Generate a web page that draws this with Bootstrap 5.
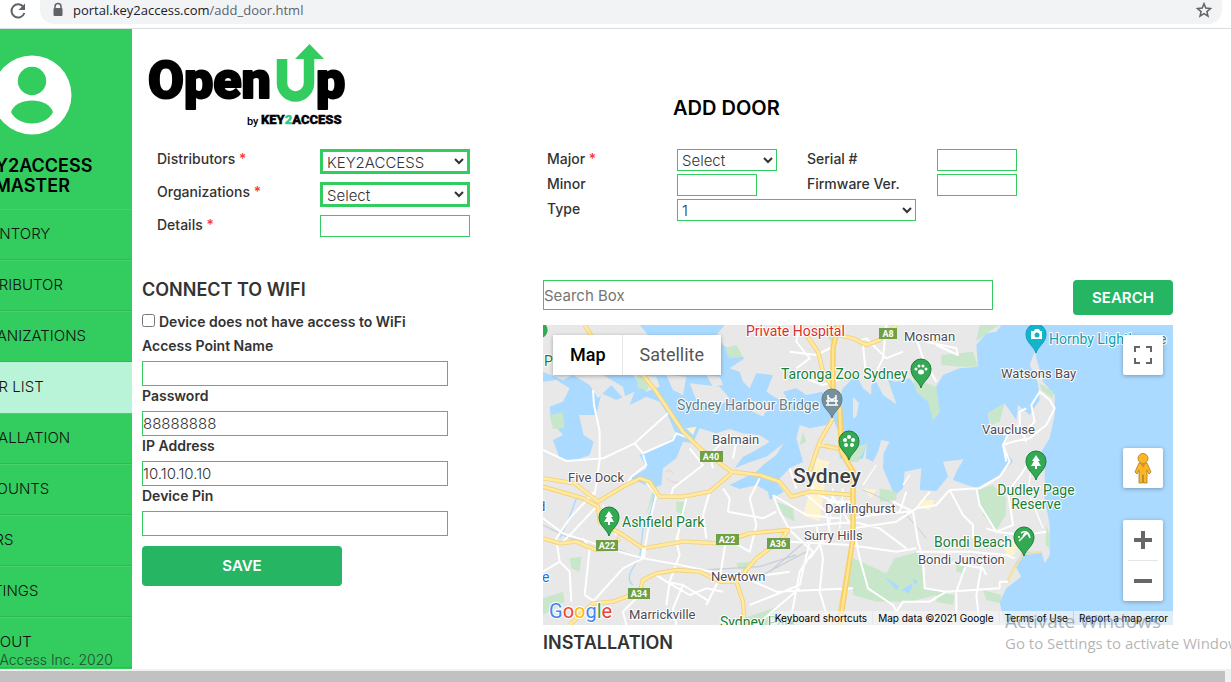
<!DOCTYPE html>
<html lang="en">
<head>
<meta charset="utf-8">
<meta name="viewport" content="width=device-width, initial-scale=1">
<title>Add Door</title>
<link href="https://cdn.jsdelivr.net/npm/bootstrap@5.3.0/dist/css/bootstrap.min.css" rel="stylesheet">
<style>
:root{--green:#33cc5f;--btn:#26b663}
body{font-family:Inter,"Liberation Sans",sans-serif;font-size:14px;line-height:20px;color:#333;background:#fff;overflow:hidden}
.browser-bar{height:29px;border-bottom:1px solid #dadce0;padding:0 9px 0 0}
.reload{width:40px;padding-left:9px}
.address{height:24px;background:#f1f3f4;border-radius:0 0 14px 14px;padding:0 9px 4px 11px;font:13px/20px "Open Sans",sans-serif;color:#5f6368}
.address b{font-weight:400;color:#202124}
.sidebar{width:132px;background:var(--green);overflow:hidden}
.sidebar-inner{width:200px;color:#000}
.profile{height:180px;padding-top:26px}
.profile h2{font-size:18px;line-height:20px;font-weight:600;margin:21px 0 0;color:#000}
.side-nav a{display:block;height:51px;line-height:48px;padding-left:33px;font-size:15px;font-weight:300;color:#111;text-decoration:none;border-top:1px solid #47d16f;border-bottom:1px solid #2eb956;white-space:nowrap}
.side-nav a.active{background:#baf4d8;border-color:#baf4d8}
.side-foot{bottom:0;right:19px;font-size:14px;line-height:19px;font-weight:300;color:#234a2e;white-space:nowrap}
.content{padding:0 58px 0 10px}
.left-col{width:401px;flex:none}
.page-head{height:120px}
.page-title{font-size:20px;line-height:20px;font-weight:600;color:#000;padding:69px 0 0 130px;margin:0}
.form-band{min-height:131px}
.door-form{padding-left:15px}
.door-form .line{height:33px}
.door-form label{width:163px}
.door-form label,.unit-form label{font-weight:500}
.req{color:#f33}
.unit-form{padding-left:4px}
.unit-form .line{height:25px}
.unit-form label{width:130px}
.field,.pick{border:1px solid var(--green);border-radius:0;background:#fff;color:#333;padding:0;font-size:15px;line-height:18px;font-weight:300;height:22px}
.pick.thick{border-width:3px;height:25px}
.w150{width:150px}.w80{width:80px}.w100{width:100px}.w239{width:239px}
.slot{width:130px}
.section-title{font-size:18px;line-height:20px;font-weight:600;margin:0;color:#333}
.wifi .section-title{margin-bottom:12px}
.wifi label{font-weight:600}
.wifi .group{height:50px}
.wifi .group label{display:block;height:25px}
.wifi .field{width:306px;height:25px;display:block}
.wifi input[type=checkbox]{width:13px;height:13px;margin:0 4px 3px 0}
.action{background:var(--btn);color:#fff;border:0;border-radius:4px;font-size:15px;font-weight:600;padding:0}
.action:hover{background:#1fa557;color:#fff}
.save{width:200px;height:40px;margin-top:10px}
.search{width:100px;height:35px}
.search-row{margin-bottom:10px}
.search-field{width:450px;height:30px;font-weight:400}
.search-field::placeholder{color:#757575}
.map{height:300px;background:#aadaff;overflow:hidden}
.map>svg{display:block;width:100%;height:300px}
.map-types{left:10px;top:10px;background:#fff;box-shadow:0 1px 4px rgba(0,0,0,.3)}
.map-types button{border:0;background:#fff;height:40px;font:18px/40px Roboto,sans-serif;color:#565656;padding:0 17px}
.map-types button.on{font-weight:500;color:#000;border-right:1px solid #e6e6e6;padding-right:16px}
.ctl{right:10px;width:40px;border:0;background:#fff;border-radius:2px;box-shadow:0 1px 4px rgba(0,0,0,.3);padding:0}
.ctl button{display:block;border:0;background:none;width:40px;height:40px;padding:0}
.ctl svg{display:block;margin:auto}
.ctl-full{top:10px;height:40px}.ctl-man{top:123px;height:40px}.ctl-zoom{top:195px;height:81px}
.ctl-zoom hr{margin:0 5px;border-color:#999}
.attrib{right:0;bottom:0;font-size:10px;line-height:14px;color:#000;white-space:nowrap}
.attrib a,.attrib button{color:#000;text-decoration:none;border:0;padding:0 5px;background:rgba(245,245,245,.7);font-size:10px;line-height:14px;margin-left:1px}
.lbl{font-family:Roboto,sans-serif;font-size:13px;paint-order:stroke;stroke:#fff;stroke-width:2px;stroke-linejoin:round}
.lbl .place{font-size:14px}
.lbl .city{font-size:21px;font-weight:500}
.watermark{left:1005px;right:0;bottom:29px;overflow:hidden;white-space:nowrap;font-family:"Open Sans",sans-serif;color:rgba(130,130,130,.6);pointer-events:none}
.watermark .big{font-size:19px;line-height:24px}
.watermark .sub{font-size:15px;line-height:20px}
.hscroll{height:13px;background:#f1f1f1;padding:2px 6px 0 0}
.hscroll div{height:11px;background:#c1c1c1}
</style>
<script src="https://cdn.jsdelivr.net/npm/bootstrap@5.3.0/dist/js/bootstrap.bundle.min.js"></script>
</head>
<body>
<div class="vh-100 d-flex flex-column position-relative">
  <div class="browser-bar d-flex align-items-start">
    <div class="reload"><svg width="18" height="20" viewBox="0 0 18 20"><path d="M14.6 6.2A6.6 6.6 0 1 0 15.400 12" fill="none" stroke="#5f6368" stroke-width="2"/><path d="M16 2.500v6.500H9.500z" fill="#5f6368"/></svg></div>
    <div class="address flex-fill d-flex align-items-center">
      <svg width="14" height="16" viewBox="0 0 14 16"><path d="M4 7V4.500a3 3 0 0 1 6 0V7" fill="none" stroke="#5f6368" stroke-width="1.500"/><rect x="2.500" y="6" width="9" height="8" rx="1" fill="#5f6368"/></svg>
      <span class="ms-2 flex-fill"><b>portal.key2access.com</b>/add_door.html</span>
      <svg width="18" height="18" viewBox="0 0 18 18"><path d="M9 2.800l1.800 4.300 4.700.4-3.600 3.100 1.100 4.600L9 12.700l-4 2.500 1.100-4.600-3.600-3.100 4.700-.4z" fill="none" stroke="#5f6368" stroke-width="1.500"/></svg>
    </div>
  </div>

  <div class="d-flex flex-fill overflow-hidden">
    <aside class="sidebar d-flex justify-content-end flex-shrink-0 position-relative">
      <div class="sidebar-inner flex-shrink-0">
        <div class="profile text-center">
          <svg class="d-block mx-auto" width="80" height="80" viewBox="0 0 80 80"><circle cx="40" cy="40" r="39.500" fill="#fff"/><circle cx="40" cy="26" r="14.200" fill="#33cc5f"/><path d="M19 57C22 49 31 45.500 40 45.500S58 49 61 57C58 64 49 68.500 40 68.500S22 64 19 57z" fill="#33cc5f"/></svg>
          <h2>KEY2ACCESS<br>MASTER</h2>
        </div>
        <nav class="side-nav">
          <a href="#">INVENTORY</a><a href="#">DISTRIBUTOR</a><a href="#">ORGANIZATIONS</a><a href="#" class="active">DOOR LIST</a><a href="#">INSTALLATION</a><a href="#">ACCOUNTS</a><a href="#">USERS</a><a href="#">SETTINGS</a><a href="#">LOG OUT</a>
        </nav>
      </div>
      <div class="side-foot position-absolute">© Key2Access Inc. 2020</div>
    </aside>

    <main class="content flex-fill overflow-hidden">
      <header class="page-head d-flex">
        <div class="left-col pt-2">
          <svg width="210" height="100" viewBox="0 0 210 100" role="img" aria-label="OpenUp by KEY2ACCESS">
            <g font-family="Roboto,sans-serif" font-weight="900">
              <g font-size="52" stroke="#000" stroke-width="2" stroke-linejoin="round"><text x="6" y="61">Open</text><text x="174" y="61">p</text></g>
              <text x="105" y="88" font-size="11" font-weight="500">by</text>
              <text x="119" y="87" font-size="13" stroke="#000" stroke-width=".4">KEY<tspan fill="#33c48f" stroke="#33c48f">2</tspan>ACCESS</text>
            </g>
            <path d="M140 22V46a13.500 13.500 0 0 0 27 0V20" fill="none" stroke="#33cc5f" stroke-width="10.500"/><path d="M153 22L167.500 7 182 22z" fill="#33cc5f"/>
          </svg>
        </div>
        <h1 class="page-title">ADD DOOR</h1>
      </header>

      <div class="form-band d-flex">
        <form class="left-col door-form">
          <div class="line d-flex align-items-start"><label for="dist">Distributors <span class="req">*</span></label><select id="dist" class="pick thick w150"><option>KEY2ACCESS</option></select></div>
          <div class="line d-flex align-items-start"><label for="org">Organizations <span class="req">*</span></label><select id="org" class="pick thick w150"><option>Select</option></select></div>
          <div class="line d-flex align-items-start"><label for="det">Details <span class="req">*</span></label><input id="det" class="field w150"></div>
        </form>
        <form class="unit-form">
          <div class="line d-flex align-items-start"><label for="maj">Major <span class="req">*</span></label><div class="slot"><select id="maj" class="pick w100"><option>Select</option></select></div><label for="ser">Serial #</label><input id="ser" class="field w80"></div>
          <div class="line d-flex align-items-start"><label for="min">Minor</label><div class="slot"><input id="min" class="field w80"></div><label for="fw">Firmware Ver.</label><input id="fw" class="field w80"></div>
          <div class="line d-flex align-items-start"><label for="typ">Type</label><select id="typ" class="pick w239"><option>1</option></select></div>
        </form>
      </div>

      <div class="d-flex">
        <form class="left-col wifi">
          <h2 class="section-title">CONNECT TO WIFI</h2>
          <div class="d-flex align-items-center mb-1"><input type="checkbox" id="nowifi"><label for="nowifi">Device does not have access to WiFi</label></div>
          <div class="group"><label for="ap">Access Point Name</label><input id="ap" class="field"></div>
          <div class="group"><label for="pw">Password</label><input id="pw" class="field" value="88888888"></div>
          <div class="group"><label for="ip">IP Address</label><input id="ip" class="field" value="10.10.10.10"></div>
          <div class="group"><label for="pin">Device Pin</label><input id="pin" class="field"></div>
          <button type="button" class="action save">SAVE</button>
        </form>
        <section class="flex-fill">
          <div class="search-row d-flex justify-content-between align-items-start">
            <input class="field search-field" placeholder="Search Box" aria-label="Search Box">
            <button type="button" class="action search">SEARCH</button>
          </div>
          <div class="map position-relative">
            <svg viewBox="0 0 630 300" preserveAspectRatio="xMinYMin slice">
              <defs>
                <g id="pin-shape"><path d="M0 14C-2 7-10 4-10-5a10 10 0 0 1 20 0C10 4 2 7 0 14z"/></g>
                <g id="tree"><path d="M0-12L4-6H2L5-1H1V2H-1V-1H-5L-2-6H-4z" fill="#fff"/></g>
              </defs>
              <!-- terrain is drawn on a grid three times finer than the labels -->
              <svg width="630" height="300" viewBox="0 0 1890 900">
                <g fill="#e8e8e8">
                  <path d="M0 900V170L40 165 80 190 60 230 20 245 25 290 60 330 30 345 50 400 90 408 140 390 152 350 122 330 108 270 160 270 175 205 220 225 275 200 260 240 310 215 350 230 372 265 400 330 380 345 340 370 290 390 312 430 262 460 330 490 355 480 360 430 400 400 420 350 450 355 470 310 520 325 560 312 600 325 650 330 680 350 640 375 600 395 575 430 620 412 670 395 722 355 700 390 660 420 640 440 560 480 590 492 640 480 675 500 680 525 722 500 700 470 740 430 780 410 760 340 770 300 800 310 850 300 870 280 890 330 890 400 930 410 960 400 972 352 968 400 990 410 1005 380 1015 345 1040 350 1022 385 1020 430 1055 512 1080 490 1085 440 1135 430 1130 495 1180 498 1215 455 1200 410 1262 403 1240 440 1230 465 1300 490 1370 450 1410 410 1380 370 1390 320 1340 300 1335 265 1385 235 1420 285 1425 240 1460 270 1490 225 1485 175 1460 120 1475 80 1500 170 1535 210 1535 270 1520 340 1495 380 1505 430 1505 520 1520 600 1520 690 1505 715 1495 680 1440 680 1415 720 1435 755 1390 790 1370 830 1385 900z"/>
                  <path d="M545 0H1375L1360 20 1330 25 1300 60 1305 125 1250 130 1200 150 1170 200 1190 260 1170 285 1165 230 1130 200 1100 160 1060 170 1035 165 1060 238 1020 210 1000 170 985 180 985 210 960 190 940 150 900 190 880 235 850 240 840 200 790 210 760 190 720 200 740 235 700 220 670 200 690 150 640 145 620 190 600 170 590 140 560 130 605 100 540 60 520 30z"/>
                  <path d="M0 0H290L320 35 230 60 180 150 240 185 250 230 205 180 165 220 140 180 90 150 60 165 0 140z"/>
                  <path d="M270 150L340 155 350 185 310 200zM370 150L430 155 420 210 390 195zM440 175L530 185 560 220 510 260 460 225zM490 150L530 155 540 180 510 185zM620 225L680 240 660 275 620 255zM930 215L948 235 940 275 930 280z"/>
                </g>
                <g fill="#c8e6c9">
                  <path d="M1110 160L1180 185 1190 260 1170 285 1155 230 1120 200zM1335 265L1385 235 1370 290 1345 300zM1195 90L1290 80 1305 125 1250 125 1195 120zM1310 0H1370L1330 25 1300 50zM1490 175L1530 200 1530 220 1495 195zM1300 495L1350 480 1390 520 1388 570 1360 615 1320 570zM1055 700L1130 680 1145 790 1220 800 1100 830 1000 830 930 810V700L1030 745zM920 700L980 750 960 800 910 790zM600 880L690 850 720 870 800 900H590zM1320 795L1375 810 1370 835 1330 825zM1510 600L1522 640 1518 670 1508 660zM700 530L750 550 755 590 720 570zM330 490L340 500 310 570 300 610zM0 820L60 800 65 830 0 870zM20 270L60 262 65 310 30 312zM900 380L975 355 945 410 900 410zM780 320L790 350 770 360zM720 130L760 160 740 170zM280 150L320 160 315 195 285 190zM545 70L580 60 600 95 560 100zM80 700L115 695 110 740 85 730zM400 530H430L425 570 400 560zM1010 490L1060 500 1060 525 1010 530zM1180 800L1235 810 1230 840 1180 830zM1240 715L1270 720 1260 745 1240 740zM580 715L620 710 605 735 585 730zM850 0L880 0 870 60 850 30z"/>
                </g>
                <path d="M820 400L860 410 850 440 830 590 780 570 800 500zM1130 525L1175 525 1160 555 1135 550zM960 490L1000 495 985 520zM1375 655L1425 640 1420 680 1400 700zM430 310L460 305 450 330zM400 625L415 650 395 660z" fill="#fef3cf"/>
                <path d="M370 440Q380 430 390 445M370 460L385 470 410 475 425 460" fill="none" stroke="#ddd6cc" stroke-width="3"/>
                <path d="M1415 720L1390 775 1415 730 1440 688 1495 680" fill="none" stroke="#f6e0a4" stroke-width="6"/>
                <path d="M1025 755L1070 785 1060 795zM1075 795L1110 775 1100 805zM1110 760L1125 770 1115 780z" fill="#aadaff"/>
                <g fill="none" stroke="#c9d0d8" stroke-width="4"><path d="M0 600L80 640 180 660 300 700 480 735 650 725 760 690"/><path d="M960 495Q1050 530 1080 560T1150 640" stroke-width="3"/><path d="M640 760L790 680M680 740L820 620"/><path d="M270 780Q240 760 290 700L300 610Q330 560 335 500M100 520Q80 580 50 640" stroke="#aadaff"/></g>
                <g fill="none" stroke="#fff" stroke-width="6" stroke-linejoin="round">
                  <path d="M150 195L153 240 170 320V405L155 510M375 265L275 355 180 400 70 408 0 375M275 355L300 385 390 345 400 325 440 340M300 390L310 420 265 455 250 480M155 500L80 580 40 640 50 710 0 740M50 710L80 740 85 830M165 540L90 620 60 650M120 640L140 670 125 810 155 830M180 540L220 630M300 460L340 510 320 590 300 700 240 730 150 830M300 700L410 720 600 760 740 740M0 580L60 625 230 680 300 700M385 510L390 490 480 420 440 370M430 520L400 650 410 690 380 770 370 840M540 490L560 520 555 560 660 580 700 560M500 500L480 570 490 640M650 460L620 520 640 600 620 680 550 640 530 760 490 840M370 770L420 780 500 830M420 780L390 850 400 900M340 750L370 770 440 810 490 790 540 800M300 800L240 860 250 900"/>
                  <path d="M690 510L710 560 740 615 810 680 770 740 740 900M690 510L790 570 890 580M740 430L760 490M800 430L810 500 870 530 930 530M780 500L850 560 860 620 800 700M730 610L930 590M740 650L920 660 1060 680 1120 670M600 755L700 800 930 790M620 840L770 780 800 650M640 900L770 790M820 600L840 700 830 800 860 900M930 600L950 700 975 790 1050 840 1060 860M860 500L930 610 1060 590 1120 550 1180 540 1220 495 1310 490 1370 455 1400 410 1380 360 1410 350 1460 340 1510 300 1535 250 1520 225 1490 200 1465 240 1475 290 1440 325 1450 350M930 580L990 570 1090 560 1110 560 1125 650 1140 700 1145 790 1210 800M930 590L1010 610 1090 670M1110 560L1050 530M1090 500L1070 560M1120 550L1160 500M1220 495L1260 570 1290 600 1290 640M1300 490L1310 540 1360 620 1410 600 1395 500 1440 440 1470 390M1360 620L1330 610M1360 620L1440 630 1510 620M1120 680L1280 680 1390 690 1415 700M1280 690L1240 800 1240 900M1140 700L1320 730 1330 750M1320 700L1300 810 1310 900M1210 800L1160 830 1080 830 1060 860M1210 800L1370 790 1370 770 1395 770M1180 170L1140 100 1120 40M960 60L970 160M940 50L970 40 1030 100 1080 80M1030 0L1020 100 1000 140M1150 50L1240 70 1245 90 1180 60M1380 330L1430 300 1430 260 1450 250M1390 410L1380 360 1400 320M770 0L760 50 800 100 760 130M760 150L840 180 900 160M880 60L820 90 740 80M520 350L560 330 580 350 570 400M540 350L500 390 510 430"/>
                  <path d="M850 530L940 540M850 560L930 560M870 490L860 600M900 490L890 610M825 500L930 510M980 560L1050 540M1080 480L1100 450M960 480L1000 420M1470 390L1455 500 1500 610" stroke-width="4"/>
                </g>
                <g fill="none" stroke="#f4cf75" stroke-width="13" stroke-linejoin="round">
                  <path id="arterials" d="M125 0L150 40 240 120 300 150 340 200 420 320 470 370 565 440 650 450 710 470 745 515 800 500 930 510M0 460L95 475 165 530 240 485 290 460 320 470 350 515 420 515 500 500 565 445M0 485L120 520 165 545 170 590 240 630 300 670 420 650 530 655 620 625 735 615 710 650 680 670 640 700 580 770M0 640L50 655 100 650 160 675 200 670 230 640M80 900L150 835 210 830 290 800 300 765 340 745 400 735 470 740 530 770 580 770 600 830 605 900M790 30L825 80 840 140 870 190M800 440L830 350 870 280M885 0L870 70 870 190 890 250 895 380 930 440V640L890 870M830 360L895 372M885 30L930 40 970 60 1010 45 1060 0"/>
                </g>
                <path d="M125 0L150 40 240 120 300 150 340 200 420 320 470 370 565 440 650 450 710 470 745 515 800 500 930 510M0 460L95 475 165 530 240 485 290 460 320 470 350 515 420 515 500 500 565 445M0 485L120 520 165 545 170 590 240 630 300 670 420 650 530 655 620 625 735 615 710 650 680 670 640 700 580 770M0 640L50 655 100 650 160 675 200 670 230 640M80 900L150 835 210 830 290 800 300 765 340 745 400 735 470 740 530 770 580 770 600 830 605 900M790 30L825 80 840 140 870 190M800 440L830 350 870 280M885 0L870 70 870 190 890 250 895 380 930 440V640L890 870M830 360L895 372M885 30L930 40 970 60 1010 45 1060 0" fill="none" stroke="#ffeaa0" stroke-width="8" stroke-linejoin="round"/>
                <path d="M885 0L870 70 870 190 890 250 895 380 930 440V640L890 900" fill="none" stroke="#f8cf63" stroke-width="16" stroke-linejoin="round"/>
                <path d="M885 0L870 70 870 190 890 250 895 380 930 440V640L890 900" fill="none" stroke="#ffe594" stroke-width="7" stroke-linejoin="round"/>
                <path d="M300 700L303 670" stroke="#fff" stroke-width="12"/>
                <circle cx="-10" cy="15" r="24" fill="#34a853"/>
              </svg>
              <g fill="#6fa045"><rect x="336" y="3" width="18" height="11"/><rect x="157" y="126" width="23" height="11"/><rect x="53" y="215" width="22" height="11"/><rect x="173" y="209" width="23" height="11"/><rect x="224" y="213" width="23" height="11"/><rect x="85" y="263" width="22" height="11"/></g>
              <g fill="#fff" font-family="Roboto,sans-serif" font-size="9" font-weight="700" text-anchor="middle"><text x="345" y="12">A8</text><text x="168" y="135">A40</text><text x="64" y="224">A22</text><text x="184" y="218">A22</text><text x="235" y="222">A36</text><text x="96" y="272">A34</text></g>
              <g fill="#34a853" stroke="#188038">
                <use href="#pin-shape" x="378" y="49"/><use href="#pin-shape" x="306" y="121"/><use href="#pin-shape" x="66" y="197"/><use href="#pin-shape" x="493" y="141"/><use href="#pin-shape" x="481" y="217"/>
                <use href="#pin-shape" x="289" y="79" fill="#78909c" stroke="#607d8b"/><use href="#pin-shape" x="493" y="14" fill="#12b5cb" stroke="#129eaf"/>
              </g>
              <use href="#tree" x="66" y="198"/><use href="#tree" x="493" y="142"/>
              <g fill="#fff"><ellipse cx="378" cy="47" rx="3" ry="2.500"/><circle cx="373" cy="44" r="1.500"/><circle cx="376" cy="41" r="1.500"/><circle cx="380" cy="41" r="1.500"/><circle cx="383" cy="44" r="1.500"/>
              <path d="M488 6h3l1-2h4l1 2h2v8h-11z"/><circle cx="494" cy="10" r="2.500" fill="#12b5cb"/></g>
              <g fill="#fff"><circle cx="306" cy="112" r="2"/><circle cx="310" cy="115" r="2"/><circle cx="309" cy="120" r="2"/><circle cx="303" cy="120" r="2"/><circle cx="302" cy="115" r="2"/></g>
              <g stroke="#fff" stroke-width="1.500" fill="none"><path d="M285 70V80M293 70V80M283 76H295M283 80H295M285 72Q289 77 293 72"/><path d="M476 216L484 208M478 208Q485 204 487 213M480 211Q484 204 487 213"/></g><circle cx="476" cy="212" r="1" fill="#fff"/>
              <g class="lbl" fill="#188038">
                <text class="place" x="1" y="41">P</text><text class="place" x="238" y="54">Taronga Zoo Sydney</text><text class="place" x="79" y="202">Ashfield Park</text><text class="place" x="493" y="170" text-anchor="middle">Dudley Page</text><text class="place" x="493" y="184" text-anchor="middle">Reserve</text><text class="place" x="391" y="222">Bondi Beach</text><text class="place" x="177" y="302">Sydney Park</text>
                <text class="place" x="506" y="19" fill="#129eaf">Hornby Lighthouse</text><text class="place" x="203" y="11" fill="#d93025">Private Hospital</text><text class="place" x="134" y="85" fill="#607d8b">Sydney Harbour Bridge</text><text class="place" x="-1" y="257" fill="#1a73e8">e</text>
              </g>
              <g class="lbl" fill="#4d4d57">
                <text x="361" y="16">Mosman</text><text x="458" y="53">Watsons Bay</text><text x="439" y="109">Vaucluse</text><text x="169" y="119">Balmain</text><text x="25" y="157">Five Dock</text><text x="282" y="188">Darlinghurst</text><text x="261" y="215">Surry Hills</text><text x="375" y="239">Bondi Junction</text><text x="168" y="256">Newtown</text><text x="86" y="294">Marrickville</text><text x="-5" y="186">d</text>
                <text class="city" x="250" y="158" fill="#3c4043">Sydney</text>
              </g>
              <text x="6" y="293" font-family="Roboto,sans-serif" font-size="20" paint-order="stroke" stroke="#fff" stroke-width="2"><tspan fill="#4285f4">G</tspan><tspan fill="#ea4335">o</tspan><tspan fill="#fbbc05">o</tspan><tspan fill="#4285f4">g</tspan><tspan fill="#34a853">l</tspan><tspan fill="#ea4335">e</tspan></text>
            </svg>
            <div class="map-types position-absolute d-flex"><button type="button" class="on">Map</button><button type="button">Satellite</button></div>
            <div class="ctl ctl-full position-absolute"><button type="button" aria-label="Full screen"><svg width="18" height="18" viewBox="0 0 18 18"><path d="M1 6V1H6M12 1H17V6M17 12V17H12M6 17H1V12" fill="none" stroke="#666" stroke-width="2"/></svg></button></div>
            <div class="ctl ctl-man position-absolute"><button type="button" aria-label="Street View"><svg width="18" height="32" viewBox="0 0 18 32"><g fill="#fbb724" stroke="#a87c25" stroke-width=".8"><path d="M5 11L1 20 3 22 5 18V31H8.500V23H9.500V31H13V18L15 22 17 20 13 11z"/><circle cx="9" cy="6.500" r="5"/></g><path d="M6 11H12L9 16z" fill="#e5892b"/></svg></button></div>
            <div class="ctl ctl-zoom position-absolute"><button type="button" aria-label="Zoom in"><svg width="18" height="18" viewBox="0 0 18 18"><path d="M0 9H18M9 0V18" stroke="#666" stroke-width="4"/></svg></button><hr><button type="button" aria-label="Zoom out"><svg width="18" height="18" viewBox="0 0 18 18"><path d="M0 9H18" stroke="#666" stroke-width="4"/></svg></button></div>
            <div class="attrib position-absolute d-flex"><button type="button">Keyboard shortcuts</button><a href="#">Map data ©2021 Google</a><a href="#">Terms of Use</a><a href="#">Report a map error</a></div>
          </div>
          <h2 class="section-title mt-2">INSTALLATION</h2>
        </section>
      </div>
    </main>
  </div>
  <div class="hscroll"><div></div></div>
  <div class="watermark position-absolute"><div class="big">Activate Windows</div><div class="sub">Go to Settings to activate Windows.</div></div>
</div>
</body>
</html>
